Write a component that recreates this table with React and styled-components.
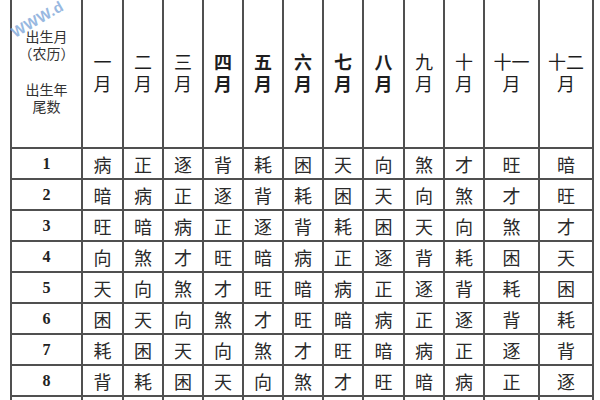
import React from 'react';
import styled, { createGlobalStyle } from 'styled-components';

const GlobalStyle = createGlobalStyle`
  html, body {
    margin: 0;
    padding: 0;
    background: #ffffff;
  }
  body {
    width: 600px;
    height: 400px;
    overflow: hidden;
    font-family: "Noto Sans CJK SC", "Noto Sans", sans-serif;
  }
`;

const months = [
  { label: ['一', '月'], bold: false },
  { label: ['二', '月'], bold: false },
  { label: ['三', '月'], bold: false },
  { label: ['四', '月'], bold: true },
  { label: ['五', '月'], bold: true },
  { label: ['六', '月'], bold: true },
  { label: ['七', '月'], bold: true },
  { label: ['八', '月'], bold: true },
  { label: ['九', '月'], bold: false },
  { label: ['十', '月'], bold: false },
  { label: ['十一', '月'], bold: false },
  { label: ['十二', '月'], bold: false },
];

const rows = [
  '病正逐背耗困天向煞才旺暗',
  '暗病正逐背耗困天向煞才旺',
  '旺暗病正逐背耗困天向煞才',
  '向煞才旺暗病正逐背耗困天',
  '天向煞才旺暗病正逐背耗困',
  '困天向煞才旺暗病正逐背耗',
  '耗困天向煞才旺暗病正逐背',
  '背耗困天向煞才旺暗病正逐',
  '逐背耗困天向煞才旺暗病正',
].map((s) => s.split(''));

const colWidths = [71, 41, 40, 40, 40, 40, 40, 40, 41, 40, 40, 55, 54];

const Page = styled.div`
  width: 600px;
  height: 400px;
  position: relative;
  overflow: hidden;
  padding-left: 10px;
  box-sizing: border-box;
`;

const Watermark = styled.div`
  position: absolute;
  left: 8px;
  top: 26px;
  transform: rotate(-30deg);
  transform-origin: left top;
  font-family: "Liberation Sans", Arial, sans-serif;
  font-weight: bold;
  font-size: 15px;
  letter-spacing: 0.5px;
  color: #7ea7d9;
  opacity: 0.8;
  pointer-events: none;
`;

const Table = styled.table`
  border-collapse: collapse;
  table-layout: fixed;
  width: 584px;
  margin-top: -5px;
  color: #222;
`;

const Cell = styled.td`
  border: 2px solid #505050;
  text-align: center;
  vertical-align: middle;
  padding: 0;
  height: 29px;
  font-size: 18px;
  line-height: 20px;
  color: #2a2a2a;
`;

const NumCell = styled(Cell)`
  font-family: "Liberation Serif", "Times New Roman", serif;
  font-weight: bold;
  font-size: 16px;
  color: #222;
`;

const HeadCell = styled.th`
  border: 2px solid #505050;
  height: 150px;
  padding: 0;
  text-align: center;
  vertical-align: middle;
  font-size: 18px;
  line-height: 22px;
  font-weight: ${(p) => (p.$bold ? 700 : 400)};
  color: #1e1e1e;
`;

const CornerCell = styled(HeadCell)`
  vertical-align: top;
  font-size: 14px;
  line-height: 17px;
  font-weight: 400;
  color: #333;
`;

const CornerText = styled.div`
  padding-top: 31px;
  display: flex;
  flex-direction: column;
  align-items: center;
  gap: 19px;
`;

const Line = styled.span`
  display: block;
`;

export default function App() {
  return (
    <>
      <GlobalStyle />
      <Page>
        <Table>
          <colgroup>
            {colWidths.map((w, i) => (
              <col key={i} style={{ width: w }} />
            ))}
          </colgroup>
          <thead>
            <tr>
              <CornerCell>
                <CornerText>
                  <div>
                    <Line>出生月</Line>
                    <Line>（农历）</Line>
                  </div>
                  <div>
                    <Line>出生年</Line>
                    <Line>尾数</Line>
                  </div>
                </CornerText>
              </CornerCell>
              {months.map((m, i) => (
                <HeadCell key={i} $bold={m.bold}>
                  <Line>{m.label[0]}</Line>
                  <Line>{m.label[1]}</Line>
                </HeadCell>
              ))}
            </tr>
          </thead>
          <tbody>
            {rows.map((r, i) => (
              <tr key={i}>
                <NumCell>{i + 1}</NumCell>
                {r.map((c, j) => (
                  <Cell key={j}>{c}</Cell>
                ))}
              </tr>
            ))}
          </tbody>
        </Table>
        <Watermark>WWW.d</Watermark>
      </Page>
    </>
  );
}
